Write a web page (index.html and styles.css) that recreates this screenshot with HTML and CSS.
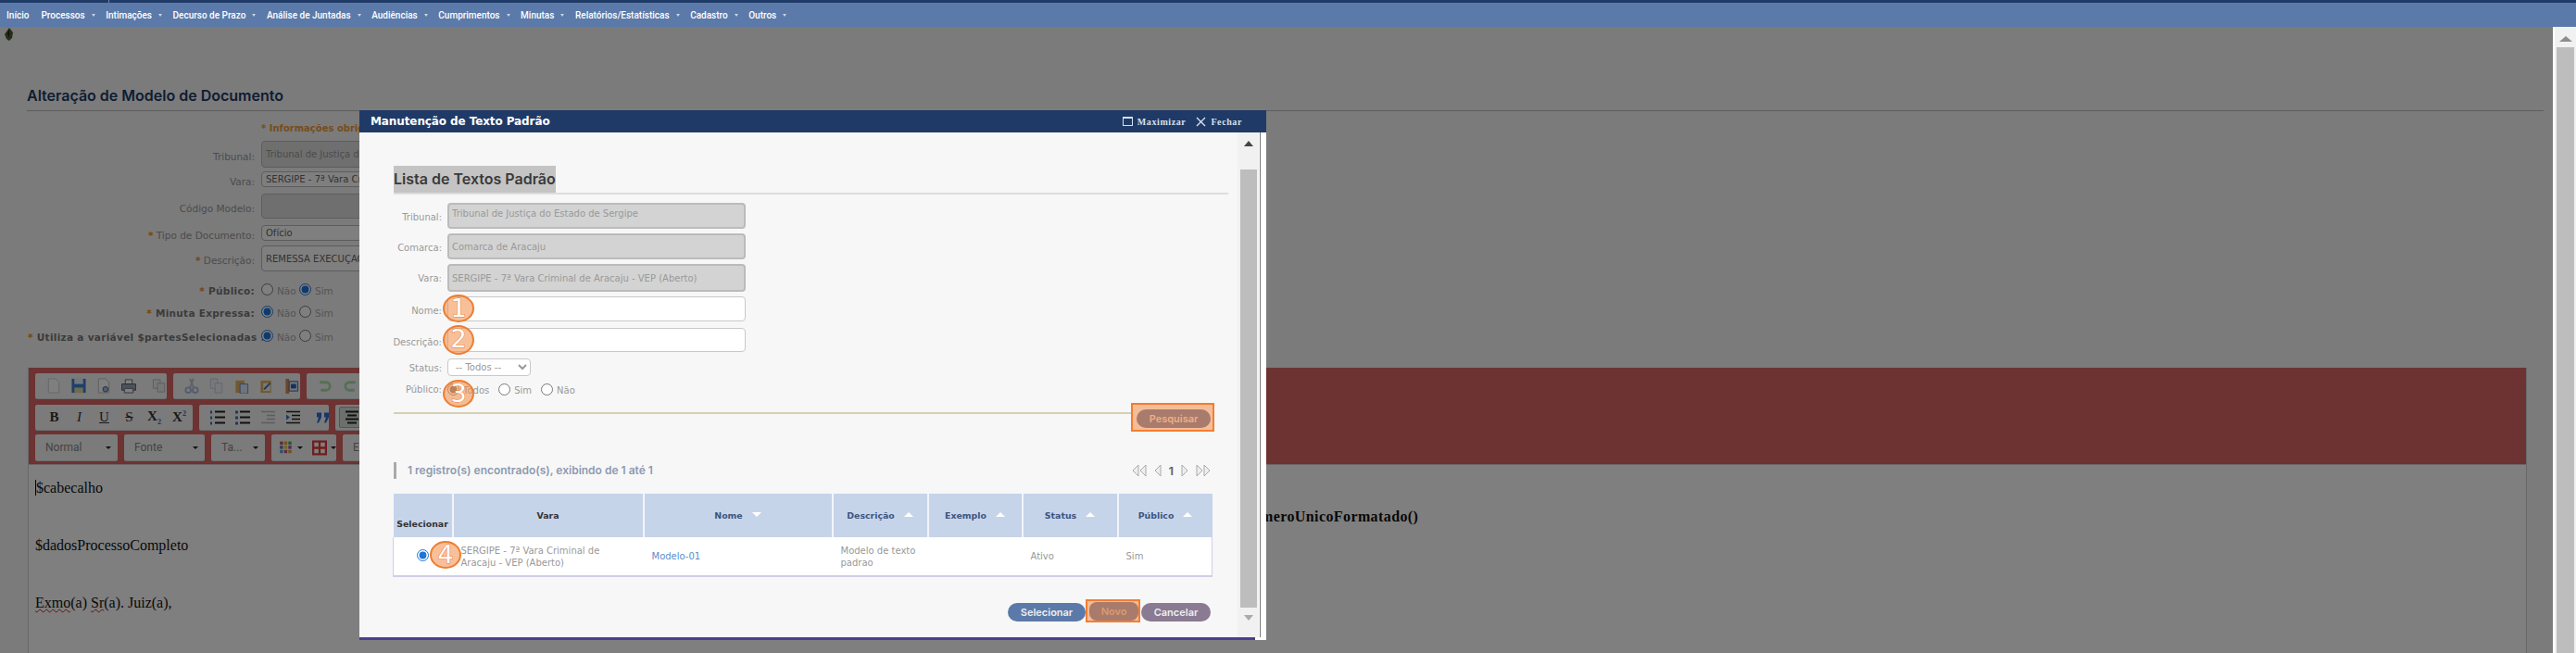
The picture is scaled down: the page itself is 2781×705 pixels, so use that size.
FILE: index.html
```html
<!DOCTYPE html>
<html lang="pt-BR">
  <head>
    <meta charset="utf-8">
    <title>Alteração de Modelo de Documento</title>
    <link rel="stylesheet" href="styles.css">
  </head>
  <body>
    <div class="topbar"><div class="topbar-tab"></div></div>
    <nav class="menu">
      <a class="menu-home">Início</a>
      <a>Processos</a>
      <a>Intimações</a>
      <a>Decurso de Prazo</a>
      <a>Análise de Juntadas</a>
      <a>Audiências</a>
      <a>Cumprimentos</a>
      <a>Minutas</a>
      <a>Relatórios/Estatísticas</a>
      <a>Cadastro</a>
      <a>Outros</a>
    </nav>

    <div class="page">
      <div class="content">
        <svg class="turtle" width="10" height="14" viewBox="0 0 10 14"><path d="M5 0 9 5 8 11 5 14 2 12 0 7Z" fill="#4c5a33"/><path d="M5 1 3 6 5 11Z" fill="#1c2412"/></svg>
        <h2 class="page-title">Alteração de Modelo de Documento</h2>

        <div class="doc-form">
          <div class="required-note"><span>* Informações obrigatórias</span></div>

          <label class="doc-label">Tribunal:</label>
          <input class="doc-input doc-input-off h29" value="Tribunal de Justiça do Estado de Sergipe" disabled>
          <label class="doc-label mb3">Vara:</label>
          <input class="doc-input h17 mb3" value="SERGIPE - 7ª Vara Criminal de Aracaju - VEP (Aberto)">
          <label class="doc-label mb3">Código Modelo:</label>
          <input class="doc-input doc-input-off h27 mb3" disabled>
          <label class="doc-label mb1"><i>*</i> Tipo de Documento:</label>
          <input class="doc-input h17 mb1" value="Ofício">
          <label class="doc-label"><i>*</i> Descrição:</label>
          <input class="doc-input h28" value="REMESSA EXECUÇÃO">
          <label class="doc-label doc-strong radio-row-first"><i>*</i> Público:</label>
          <div class="doc-radios radio-row-first"><input type="radio" name="pub"> <span>Não</span> <input type="radio" name="pub" checked> <span>Sim</span></div>
          <label class="doc-label doc-strong"><i>*</i> Minuta Expressa:</label>
          <div class="doc-radios"><input type="radio" name="min" checked> <span>Não</span> <input type="radio" name="min"> <span>Sim</span></div>
          <label class="doc-label doc-strong radio-row-last"><i>*</i> Utiliza a variável $partesSelecionadas :</label>
          <div class="doc-radios radio-row-last"><input type="radio" name="var" checked> <span>Não</span> <input type="radio" name="var"> <span>Sim</span></div>
        </div>

        <div class="editor">
          <div class="toolbar">
            <div class="tool-row">
              <div class="tool-group w142">
                <svg class="ico" viewBox="0 0 16 18"><path d="M2 1h8l4 4v12H2Z" fill="#fff" stroke="#ccc"/></svg>
                <svg class="ico" viewBox="0 0 16 18"><path d="M0 1h16v16H0Z" fill="#3f7fd0"/><path d="M3 1h10v6H3Z" fill="#e6eef8"/><path d="M3 11h10v6H3Z" fill="#d8d8a0"/></svg>
                <svg class="ico" viewBox="0 0 16 18"><path d="M2 1h8l4 4v12H2Z" fill="#fff" stroke="#bbb"/><circle cx="10" cy="13" r="3" fill="#9cc0e8" stroke="#557"/></svg>
                <svg class="ico" viewBox="0 0 16 18"><path d="M4 2h8v5H4Z" fill="#fff" stroke="#667"/><path d="M0 7h16v7H0Z" fill="#9aa6b8" stroke="#556"/><path d="M3 12h10v5H3Z" fill="#fff" stroke="#667"/></svg>
                <svg class="ico ico-last" viewBox="0 0 16 18"><path d="M1 2h8v10H1Z" fill="#eee" stroke="#bbb"/><path d="M6 6h8v10H6Z" fill="#eee" stroke="#bbb"/></svg>
              </div>
              <div class="tool-group w137">
                <svg class="ico" viewBox="0 0 16 18"><path d="M10 1 6 11M6 1l4 10" stroke="#b8c4d4" stroke-width="2"/><circle cx="4" cy="14" r="3" fill="none" stroke="#a8bcd8" stroke-width="2"/><circle cx="12" cy="14" r="3" fill="none" stroke="#a8bcd8" stroke-width="2"/></svg>
                <svg class="ico" viewBox="0 0 16 18"><path d="M1 1h8v11H1Z" fill="#eef2f8" stroke="#c4cede"/><path d="M6 6h8v11H6Z" fill="#eef2f8" stroke="#c4cede"/></svg>
                <svg class="ico" viewBox="0 0 16 18"><path d="M1 3h10v14H1Z" fill="#e0b060"/><path d="M6 7h9v11H6Z" fill="#dce8f8" stroke="#6a8ab8"/></svg>
                <svg class="ico" viewBox="0 0 16 18"><path d="M1 3h12v14H1Z" fill="#e0b060"/><path d="M4 6h8v9H4Z" fill="#f4f4e8"/><path d="M5 13 12 6" stroke="#3a70c0" stroke-width="2"/></svg>
                <svg class="ico" viewBox="0 0 16 18"><path d="M1 1h4v17H1Z" fill="#d88a50"/><path d="M5 4h10v11H5Z" fill="#dce8f8" stroke="#3a60a8"/><path d="M7 7h6v5H7Z" fill="#2f5fb0"/></svg>
              </div>
              <div class="tool-group w300">
                <svg class="ico" viewBox="0 0 16 18"><path d="M2 5h7a4 4 0 0 1 0 9H3" fill="none" stroke="#a8e0a8" stroke-width="3"/></svg>
                <svg class="ico" viewBox="0 0 16 18"><path d="M14 5H7a4 4 0 0 0 0 9h6" fill="none" stroke="#a8e0a8" stroke-width="3"/></svg>
              </div>
            </div>
            <div class="tool-row">
              <div class="tool-group w170 tool-text">
                <b class="glyph">B</b><i class="glyph">I</i><u class="glyph">U</u><s class="glyph">S</s>
                <b class="glyph">X<sub>2</sub></b><b class="glyph">X<sup>2</sup></b>
              </div>
              <div class="tool-group w140">
                <svg class="ico" viewBox="0 0 16 16"><path d="M5 2h11M5 8h11M5 14h11" stroke="#222" stroke-width="2"/><path d="M0 1h2v3H0ZM0 7h2v3H0ZM0 13h2v3H0Z" fill="#3a70c0"/></svg>
                <svg class="ico" viewBox="0 0 16 16"><path d="M5 2h11M5 8h11M5 14h11" stroke="#222" stroke-width="2"/><path d="M0 1h3v3H0ZM0 7h3v3H0ZM0 13h3v3H0Z" fill="#3a70c0"/></svg>
                <svg class="ico" viewBox="0 0 16 16"><path d="M1 2h15M7 6h9M7 10h9M1 14h15" stroke="#bbb" stroke-width="1.6"/></svg>
                <svg class="ico" viewBox="0 0 16 16"><path d="M1 2h15M7 6h9M7 10h9M1 14h15" stroke="#222" stroke-width="1.6"/><path d="M1 5l4 3-4 3Z" fill="#3a70c0"/></svg>
                <svg class="ico ico-last" viewBox="0 0 16 16"><path d="M1 3h5v5L3 14H1l2-6H1ZM9 3h5v5l-3 6H9l2-6H9Z" fill="#2f6fd0"/></svg>
              </div>
              <div class="tool-group w300">
                <span class="tool-active"><svg class="ico" viewBox="0 0 16 16"><path d="M1 2h14M3 6h10M1 10h14M3 14h10" stroke="#222" stroke-width="2"/></svg></span>
              </div>
            </div>
            <div class="tool-row tool-row-combo">
              <div class="tool-group w89 combo"><span>Normal</span><em></em></div>
              <div class="tool-group w87 combo"><span>Fonte</span><em></em></div>
              <div class="tool-group w58 combo"><span>Ta...</span><em></em></div>
              <div class="tool-group w70 combo-icons">
                <svg class="ico" viewBox="0 0 14 14"><path d="M1 1h3v3H1Z" fill="#d05050"/><path d="M5 1h3v3H5Z" fill="#e8a030"/><path d="M9 1h3v3H9Z" fill="#50b050"/><path d="M1 5h3v3H1Z" fill="#4a7ad0"/><path d="M5 5h3v3H5Z" fill="#e8d030"/><path d="M9 5h3v3H9Z" fill="#b050b0"/><path d="M1 9h3v3H1Z" fill="#50b0b0"/><path d="M5 9h3v3H5Z" fill="#d05090"/><path d="M9 9h3v3H9Z" fill="#e8a030"/></svg><em></em>
                <svg class="ico" viewBox="0 0 14 14"><path d="M0 0h14v14H0Z" fill="#e03a3a"/><path d="M2 2h4v4H2ZM8 2h4v4H8ZM2 8h4v4H2ZM8 8h4v4H8Z" fill="#fff"/></svg><em></em>
              </div>
              <div class="tool-group w300 combo"><span>E</span></div>
            </div>
          </div>
          <div class="editor-body">
            <p><span class="caret">$cabecalho</span></p>
            <p class="num-line"><b>$processo.numeroUnicoFormatado()</b></p>
            <p>$dadosProcessoCompleto</p>
            <p>&nbsp;</p>
            <p><span class="typo">Exmo</span>(a) <span class="typo">Sr</span>(a). Juiz(a),</p>
          </div>
        </div>

        <div class="overlay"></div>

        <div class="modal">
          <div class="modal-head">
            <strong>Manutenção de Texto Padrão</strong>
            <div class="modal-actions">
              <span class="win-ico win-max"></span><a>Maximizar</a>
              <svg class="win-close" width="11" height="11" viewBox="0 0 11 11"><path d="M1 1l9 9M10 1l-9 9" stroke="#d8e0ec" stroke-width="1.4"/></svg><a>Fechar</a>
            </div>
          </div>
          <div class="modal-body">
            <div class="modal-main">
              <div class="list-title"><h3>Lista de Textos Padrão</h3></div>

              <div class="filter-form">
                <label>Tribunal:</label><input class="f-input off h28 text-high" value="Tribunal de Justiça do Estado de Sergipe" disabled>
                <label>Comarca:</label><input class="f-input off h28" value="Comarca de Aracaju" disabled>
                <label>Vara:</label><input class="f-input off h30" value="SERGIPE - 7ª Vara Criminal de Aracaju - VEP (Aberto)" disabled>
                <label>Nome:</label><input class="f-input h27 gap7">
                <label>Descrição:</label><input class="f-input h26 gap7">
                <label class="lbl-status">Status:</label><select class="f-select gap7"><option>-- Todos --</option></select>
                <label class="lbl-public">Público:</label>
                <div class="f-radios">
                  <input type="radio" name="p" checked> <span>Todos</span>
                  <input type="radio" name="p"> <span>Sim</span>
                  <input type="radio" name="p"> <span>Não</span>
                </div>
              </div>

              <div class="search-row">
                <div class="search-line"></div>
                <div class="mark mark-search"><button class="btn btn-mark btn-search">Pesquisar</button></div>
              </div>

              <div class="result-row">
                <div class="result-count">1 registro(s) encontrado(s), exibindo de 1 até 1</div>
                <div class="pager">
                  <svg width="16" height="14" viewBox="0 0 16 14"><path d="M7 1 1 7l6 6ZM15 1 9 7l6 6Z" fill="#eee" stroke="#aaa"/></svg>
                  <svg width="8" height="14" viewBox="0 0 8 14"><path d="M7 1 1 7l6 6Z" fill="#eee" stroke="#aaa"/></svg>
                  <b>1</b>
                  <svg width="8" height="14" viewBox="0 0 8 14"><path d="M1 1l6 6-6 6Z" fill="#eee" stroke="#aaa"/></svg>
                  <svg width="16" height="14" viewBox="0 0 16 14"><path d="M1 1l6 6-6 6ZM9 1l6 6-6 6Z" fill="#eee" stroke="#aaa"/></svg>
                </div>
              </div>

              <table class="grid">
                <colgroup>
                  <col class="c-sel"><col class="c-vara"><col class="c-nome"><col class="c-desc"><col class="c-ex"><col class="c-st"><col class="c-pub">
                </colgroup>
                <thead>
                  <tr>
                    <th class="th-sel">Selecionar</th>
                    <th class="th-plain">Vara</th>
                    <th>Nome<em class="sort-down"></em></th>
                    <th>Descrição<em class="sort-up"></em></th>
                    <th>Exemplo<em class="sort-up"></em></th>
                    <th>Status<em class="sort-up"></em></th>
                    <th>Público<em class="sort-up"></em></th>
                  </tr>
                </thead>
                <tbody>
                  <tr>
                    <td class="td-radio"><input type="radio" checked></td>
                    <td class="td-vara">SERGIPE - 7ª Vara Criminal de Aracaju - VEP (Aberto)</td>
                    <td><a class="row-link">Modelo-01</a></td>
                    <td>Modelo de texto padrao</td>
                    <td></td>
                    <td>Ativo</td>
                    <td>Sim</td>
                  </tr>
                </tbody>
              </table>

              <div class="actions">
                <button class="btn btn-blue">Selecionar</button>
                <div class="mark mark-new"><button class="btn btn-mark btn-new">Novo</button></div>
                <button class="btn btn-cancel">Cancelar</button>
              </div>
            </div>
            <div class="modal-track">
              <em class="arrow-up"></em>
              <div class="modal-thumb"></div>
              <em class="arrow-down"></em>
            </div>
            <div class="modal-strip"></div>
          </div>
          <div class="modal-foot"></div>

          <span class="badge badge-1">1</span>
          <span class="badge badge-2">2</span>
          <span class="badge badge-3">3</span>
          <span class="badge badge-4">4</span>
        </div>
      </div>

      <div class="page-scroll">
        <em class="page-arrow"></em>
        <div class="page-thumb"></div>
      </div>
    </div>
  </body>
</html>
```

FILE: styles.css
```css
html, body {
  margin: 0;
  height: 705px;
  overflow: hidden;
  background: #f6f6f6;
}

body {
  font-family: "DejaVu Sans", sans-serif;
  font-size: 10px;
  color: #444;
}

/* top bars */
.topbar {
  height: 3px;
  background: #1f3a66;
}

.topbar-tab {
  width: 117px;
  height: 3px;
  border-right: 1px solid #6d86ad;
}

.menu {
  height: 26px;
  display: flex;
  align-items: center;
  padding-left: 7px;
  background: #5b7aa9;
  font-family: Roboto, sans-serif;
  font-size: 10px;
  font-weight: 500;
  color: #fff;
  white-space: nowrap;
}

.menu a {
  display: flex;
  align-items: center;
  margin-right: 21.6px;
}

.menu a::after {
  content: "";
  margin-left: 7px;
  margin-right: -10px;
  border: 2px solid transparent;
  border-top: 3px solid #c8d4e6;
  border-bottom: 0;
}

.menu a.menu-home {
  margin-right: 13px;
}

.menu a.menu-home::after {
  display: none;
}

/* page under the dialog */
.page {
  display: flex;
  height: 676px;
}

.content {
  flex: 1;
  position: relative;
  overflow: hidden;
}

.page-scroll {
  width: 23px;
  border-left: 2px solid #fff;
  background: #f1f1f1;
  text-align: center;
}

.page-arrow {
  display: block;
  width: 0;
  margin: 10px auto 6px;
  border: 7px solid transparent;
  border-top: 0;
  border-bottom: 6px solid #8d8d8d;
}

.page-thumb {
  width: 19px;
  height: 660px;
  margin: 0 auto;
  background: #bdbdbd;
}

.turtle {
  display: block;
  margin: 1px 0 0 5px;
}

.page-title {
  margin: 49px 10px 0 29px;
  padding-bottom: 6px;
  height: 20px;
  line-height: 20px;
  border-bottom: 1px solid #bbb;
  font-family: Inter, sans-serif;
  font-size: 16px;
  font-weight: 600;
  color: #1f3a66;
}

.doc-form {
  display: grid;
  grid-template-columns: 245px 300px;
  column-gap: 7px;
  row-gap: 4px;
  margin: 13px 0 0 30px;
  align-items: center;
}

.required-note {
  grid-column: 2;
  height: 15px;
  font-size: 10px;
  white-space: nowrap;
  color: #ef9a3a;
  font-weight: 600;
}

.doc-label {
  text-align: right;
  font-size: 10.5px;
  color: #999;
  white-space: nowrap;
  padding-top: 4px;
}

.doc-label i {
  font-style: normal;
  color: #ee8a22;
  font-weight: bold;
}

.doc-strong {
  font-weight: bold;
  color: #777;
  letter-spacing: 0.3px;
}

.doc-input {
  box-sizing: border-box;
  width: 300px;
  padding: 0 4px;
  margin: 0;
  border: 1px solid #bbb;
  border-radius: 4px;
  background: #fff;
  font-family: "DejaVu Sans", sans-serif;
  font-size: 10px;
  color: #666;
}

.doc-input-off {
  background: #dedede;
  color: #999;
}

.h17 { height: 17px; }
.h26 { height: 26px; }
.h27 { height: 27px; }
.h28 { height: 28px; }
.h29 { height: 29px; }
.h30 { height: 30px; }

.mb1 { margin-bottom: 1px; }
.mb3 { margin-bottom: 3px; }

.radio-row-first {
  margin-top: 5px;
}

.radio-row-last {
  margin-top: 2px;
}

.doc-radios {
  height: 20px;
  display: flex;
  align-items: center;
  font-size: 10.5px;
  color: #aaa;
}

.doc-radios input {
  margin: 0 4px 0 0;
  width: 13px;
  height: 13px;
  accent-color: #1f74d8;
}

.doc-radios span {
  width: 24px;
  margin-right: 0;
  padding-top: 3px;
}

/* editor */
.editor {
  margin: 25px 0 0 30px;
  width: 2696px;
  height: 320px;
  border-right: 1px solid #d0d0d0;
  border-left: 1px solid #d0d0d0;
  background: #fff;
}

.toolbar {
  height: 105px;
  padding: 6px 0 0 7px;
  box-sizing: border-box;
  background: #da6464;
  border-bottom: 1px solid #d8c8c8;
}

.tool-row {
  display: flex;
  gap: 7px;
  height: 27px;
  margin-bottom: 7px;
}

.tool-row-combo {
  height: 28px;
  margin-top: -2px;
}

.tool-group {
  display: flex;
  align-items: center;
  box-sizing: border-box;
  padding-left: 7px;
  background: #f6f6f6;
  border-radius: 2px;
  box-shadow: 0 1px 0 #ddd;
}

.w58 { width: 58px; }
.w70 { width: 70px; }
.w87 { width: 87px; }
.w89 { width: 89px; }
.w137 { width: 137px; }
.w140 { width: 140px; }
.w142 { width: 142px; }
.w170 { width: 170px; }
.w300 { width: 300px; }

.ico {
  width: 16px;
  height: 17px;
  margin: 0 5px;
  flex: none;
}

.tool-group .ico + .ico {
  margin-left: 6px;
}

.ico-last {
  margin-left: 12px !important;
}

.tool-text .glyph {
  width: 27px;
  text-align: center;
  font-family: "Liberation Serif", serif;
  font-size: 15px;
  color: #333;
}

.tool-text sub, .tool-text sup {
  font-size: 8px;
  color: #3a70c0;
}

.tool-active {
  display: flex;
  padding: 2px 0;
  margin-left: -3px;
  background: #d8e0d8;
  border: 1px solid #aaa;
  border-radius: 2px;
}

.combo {
  position: relative;
  padding-left: 11px;
  font-family: Roboto, sans-serif;
  font-size: 12px;
  color: #888;
}

.combo em, .combo-icons em {
  display: block;
  border: 3px solid transparent;
  border-top: 3px solid #222;
  border-bottom: 0;
}

.combo em {
  margin-left: auto;
  margin-right: 7px;
}

.combo-icons {
  padding-left: 3px;
}

.combo-icons .ico {
  margin: 0 4px 0 5px !important;
}

.combo-icons em {
  margin-right: 5px;
}

.editor-body {
  padding: 9px 0 0 7px;
  font-family: "Liberation Serif", serif;
  font-size: 16px;
  color: #111;
}

.editor-body p {
  margin: 0;
  height: 31px;
  line-height: 31px;
  white-space: nowrap;
}

.caret {
  border-left: 1px solid #000;
}

.num-line {
  padding-left: 1230px;
  letter-spacing: 0.4px;
}

.typo {
  text-decoration: underline wavy #d02020 1px;
}

/* backdrop and dialog */
.overlay {
  position: absolute;
  inset: 0;
  background: rgba(0, 0, 0, 0.5);
}

.modal {
  position: absolute;
  left: 388px;
  top: 90px;
  width: 979px;
  background: #fff;
}

.modal-head {
  display: flex;
  align-items: center;
  justify-content: space-between;
  height: 24px;
  padding: 0 26px 0 12px;
  background: #1f3a66;
  color: #fff;
}

.modal-head strong {
  font-size: 12px;
  letter-spacing: -0.1px;
}

.modal-actions {
  display: flex;
  align-items: center;
  font-family: "Liberation Serif", serif;
  font-size: 10px;
  font-weight: bold;
  letter-spacing: 0.6px;
  color: #d8e0ec;
}

.win-max {
  width: 9px;
  height: 7px;
  margin-right: 5px;
  border: 1px solid #d8e0ec;
  border-top-width: 2px;
}

.win-close {
  margin: 0 5px 0 11px;
}

.modal-body {
  display: flex;
  height: 545px;
  overflow: hidden;
}

.modal-main {
  width: 949px;
  box-sizing: border-box;
  padding: 36px 25px 0 37px;
  background: #f7f7f7;
}

.modal-track {
  width: 23px;
  background: #f1f1f1;
}

.arrow-up, .arrow-down {
  display: block;
  width: 0;
  margin: 9px 0 0 7px;
  border: 5px solid transparent;
}

.arrow-up {
  border-top: 0;
  border-bottom: 6px solid #444;
}

.arrow-down {
  margin-top: 8px;
  border-bottom: 0;
  border-top: 6px solid #aaa;
}

.modal-thumb {
  width: 18px;
  height: 473px;
  margin: 25px 0 0 3px;
  background: #bdbdbd;
}

.modal-strip {
  width: 7px;
  box-sizing: border-box;
  border-left: 1px solid #777;
  border-right: 0;
  margin-left: 1px;
}

.modal-foot {
  width: 967px;
  height: 3px;
  background: #4a3f8f;
}

.list-title {
  height: 29px;
  margin-right: -15px;
  border-bottom: 2px solid #ddd;
}

.list-title h3 {
  display: inline-block;
  margin: 0;
  height: 29px;
  line-height: 29px;
  background: #c4c4c4;
  font-family: Inter, sans-serif;
  font-size: 16px;
  font-weight: 600;
  color: #3a3a3a;
}

.filter-form {
  display: grid;
  grid-template-columns: 52px 322px;
  column-gap: 6px;
  align-items: start;
  margin-top: 9px;
  font-size: 10px;
  color: #999;
}

.filter-form label {
  display: flex;
  justify-content: flex-end;
  padding-top: 10px;
  white-space: nowrap;
}

.f-input {
  display: block;
  box-sizing: border-box;
  width: 322px;
  margin: 0 0 5px;
  padding: 0 3px;
  border: 1px solid #c8c8c8;
  border-radius: 4px;
  background: #fff;
  font-family: "DejaVu Sans", sans-serif;
  font-size: 10px;
  color: #999;
}

.f-input.off {
  background: #d3d3d3;
  border: 2px solid #bbb;
}

.text-high {
  padding-bottom: 5px;
}

.gap7 {
  margin-bottom: 7px;
}

.f-select {
  display: block;
  box-sizing: border-box;
  width: 90px;
  height: 19px;
  padding-left: 4px;
  border: 1px solid #c8c8c8;
  border-radius: 4px;
  background: #fff;
  font-family: "DejaVu Sans", sans-serif;
  font-size: 10px;
  color: #999;
}

.filter-form .lbl-status {
  padding-top: 5px;
}

.filter-form .lbl-public {
  padding-top: 2px;
}

.f-radios {
  display: flex;
  align-items: center;
  height: 14px;
}

.f-radios input {
  width: 13px;
  height: 13px;
  margin: 0 4px 0 0;
  accent-color: #777;
}

.f-radios span {
  margin-right: 10px;
  padding-top: 2px;
}

.search-row {
  display: flex;
  align-items: flex-start;
  margin-top: 8px;
}

.search-line {
  flex: 1;
  height: 2px;
  margin-top: 10px;
  background: #d4d0b4;
}

.mark {
  box-sizing: border-box;
  border: 2px solid #f47d30;
  background: #f5bd97;
}

.mark-search {
  width: 90px;
  height: 31px;
  padding: 5px 0 0 4px;
}

.btn {
  border: 0;
  border-radius: 10px;
  height: 20px;
  padding: 0;
  font-family: Inter, sans-serif;
  font-size: 11px;
  font-weight: 600;
  color: #eee;
}

.btn-mark {
  background: #a87b6c;
  color: #f0ae84;
}

.btn-search {
  width: 80px;
}

.result-row {
  display: flex;
  justify-content: space-between;
  align-items: center;
  height: 18px;
  margin-top: 33px;
  padding-right: 4px;
}

.result-count {
  padding-left: 12px;
  border-left: 3px solid #aaa;
  line-height: 18px;
  font-family: Inter, sans-serif;
  font-size: 12px;
  font-weight: 600;
  color: #8e9ab0;
}

.pager {
  display: flex;
  align-items: center;
  gap: 8px;
  font-family: Inter, sans-serif;
  font-size: 12px;
  color: #666;
}

.grid {
  width: 884px;
  margin: 16px 0 0 -1px;
  table-layout: fixed;
  border-collapse: collapse;
  font-size: 10px;
  color: #999;
}

.c-sel { width: 64px; }
.c-vara { width: 206px; }
.c-nome { width: 204px; }
.c-desc { width: 103px; }
.c-ex { width: 102px; }
.c-st { width: 103px; }
.c-pub { width: 102px; }

.grid th, .grid td {
  box-sizing: border-box;
}

.grid th {
  height: 47px;
  padding: 0;
  background: #c6d4ea;
  border-right: 2px solid #f2f4fa;
  font-size: 9.4px;
  font-weight: bold;
  color: #3d5580;
}

.grid th:last-child {
  border-right: 0;
}

.grid th.th-sel {
  vertical-align: bottom;
  padding-bottom: 9px;
  color: #333;
}

.grid th.th-plain {
  color: #333;
}

.sort-up, .sort-down {
  display: inline-block;
  margin-left: 10px;
  vertical-align: 2px;
  border: 5px solid transparent;
}

.sort-up {
  border-top: 0;
  border-bottom: 5px solid #fff;
}

.sort-down {
  border-bottom: 0;
  border-top: 5px solid #fff;
}

.grid td {
  height: 42px;
  padding: 0 9px;
  background: #fff;
  border-bottom: 2px solid #cfcfe8;
  line-height: 13px;
}

.grid td.td-vara {
  padding-right: 30px;
}

.grid td:first-child {
  border-left: 1px solid #cfcfe8;
}

.grid td:last-child {
  border-right: 1px solid #cfcfe8;
}

.grid .td-radio {
  padding: 0;
  text-align: center;
}

.td-radio input {
  width: 13px;
  height: 13px;
  margin: 0;
  accent-color: #1f74d8;
}

.row-link {
  color: #5b8ec9;
}

.actions {
  display: flex;
  justify-content: flex-end;
  align-items: flex-end;
  height: 25px;
  margin-top: 24px;
  padding-right: 4px;
}

.btn-blue {
  width: 84px;
  background: #5b7aa9;
  margin-bottom: 1px;
}

.btn-cancel {
  width: 75px;
  margin: 0 0 1px 1px;
  background: #8a7a92;
}

.mark-new {
  width: 59px;
  height: 25px;
  padding: 1px 0 0 2px;
}

.btn-new {
  width: 53px;
  border-radius: 8px;
  color: #dc9a6e;
}

/* numbered callouts */
.badge {
  position: absolute;
  width: 30px;
  height: 26px;
  line-height: 25px;
  text-align: center;
  border: 2px solid #ee7d31;
  border-radius: 50%;
  background: rgba(240, 140, 70, 0.55);
  font-family: "DejaVu Sans", sans-serif;
  font-size: 27px;
  color: #fff;
  -webkit-text-stroke: 1px #ee7d31;
  paint-order: stroke fill;
}

.badge-1 { left: 90px; top: 199px; }
.badge-2 { left: 90px; top: 232px; height: 28px; }
.badge-3 { left: 90px; top: 291px; }
.badge-4 { left: 76px; top: 465px; }
```
